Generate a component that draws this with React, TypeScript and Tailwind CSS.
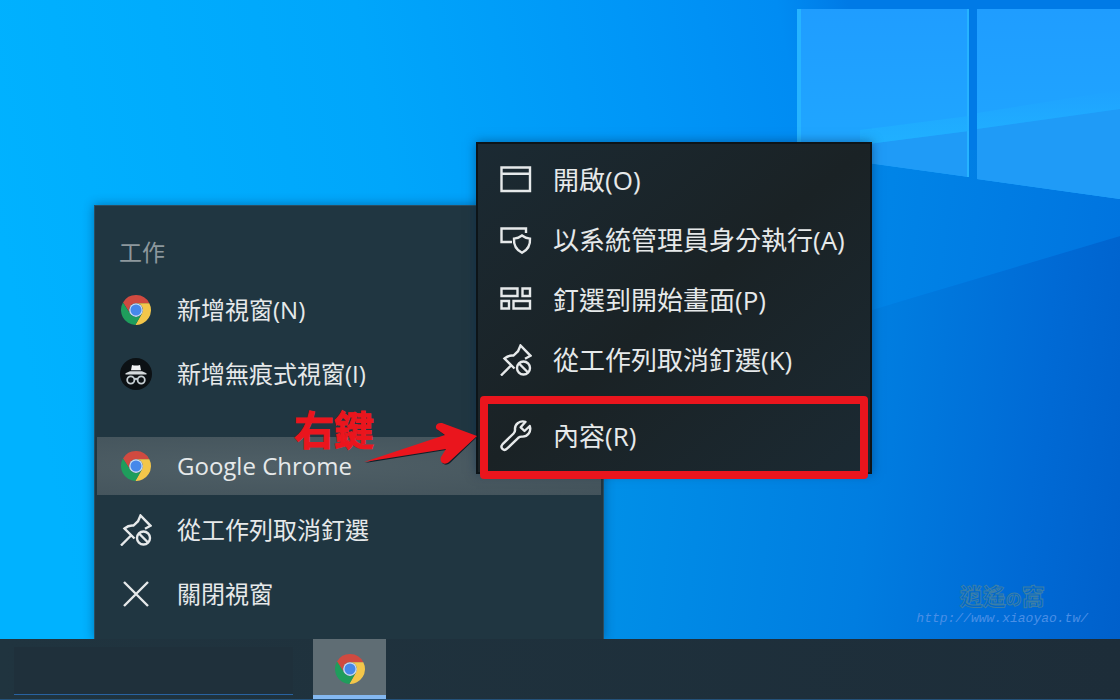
import type { ReactNode } from "react";

type MenuEntry = {
  label: string;
  icon: ReactNode;
  active?: boolean;
  marked?: boolean;
};

function ChromeIcon() {
  return (
    <svg viewBox="0 0 48 48" className="size-[30px]" aria-hidden="true">
      <path
        d="M24 13H45.3A24 24 0 0 0 3.2 12L14.5 29.5A11 11 0 0 1 24 13Z"
        fill="#d04a40"
      />
      <path
        d="M45.3 13A24 24 0 0 1 22.9 48L33.5 29.5A11 11 0 0 0 24 13Z"
        fill="#f3c64a"
      />
      <path
        d="M3.2 12A24 24 0 0 0 22.9 48L33.5 29.5A11 11 0 0 1 14.5 29.5Z"
        fill="#1f9d5c"
      />
      <circle cx="24" cy="24" r="11" fill="#c9dcf3" />
      <circle cx="24" cy="24" r="8.8" fill="#4688ea" />
    </svg>
  );
}

function IncognitoIcon() {
  return (
    <svg viewBox="0 0 32 32" className="size-8" aria-hidden="true">
      <circle cx="16" cy="16" r="16" fill="#0c1114" />
      <path d="M12 7l2 .5h4l2-.5 1 5.200H11z" fill="#f1f3f4" />
      <path d="M10 13.300h12l4.500 1.900v1.400h-21v-1.400z" fill="#d5dadc" />
      <g fill="none" stroke="#c6cfd3" strokeWidth="1.800">
        <circle cx="10.800" cy="22" r="3.600" />
        <circle cx="21.200" cy="22" r="3.600" />
        <path d="M14.400 21.500c1-.9 2.200-.9 3.200 0" />
      </g>
    </svg>
  );
}

function LineIcon({ children }: { children: ReactNode }) {
  return (
    <svg
      viewBox="0 0 32 32"
      className="size-8"
      fill="none"
      stroke="#e6e9ea"
      strokeWidth="2.4"
      aria-hidden="true"
    >
      {children}
    </svg>
  );
}

function UnpinIcon() {
  return (
    <LineIcon>
      <path d="M1 31.500L11 21.500M14.500 24.500L4.500 14.500C7.500 12 10.500 11.200 13.500 11.600L18 7.200L20.500 1.500L30.500 11.800L25 14.800" />
      <circle cx="23.500" cy="24" r="6.500" />
      <path d="M19 19.500L28 28.500" />
    </LineIcon>
  );
}

function CloseIcon() {
  return (
    <LineIcon>
      <path d="M4 4L28 28M28 4L4 28" />
    </LineIcon>
  );
}

function WindowIcon() {
  return (
    <LineIcon>
      <path d="M1.500 3.500H30V27H1.500ZM1.500 9.800H30" />
    </LineIcon>
  );
}

function AdminIcon() {
  return (
    <LineIcon>
      <path d="M12 18H1.500V4.500H26V9" />
      <path d="M22 11.500C19.500 13.500 17 14.300 14 14.600C13.500 21.500 16.500 26 22 28.800C27.500 26 30.500 21.500 30 14.600C27 14.300 24.500 13.500 22 11.500Z" />
    </LineIcon>
  );
}

function TilesIcon() {
  return (
    <LineIcon>
      <path d="M1.500 4.500H17.500V12H1.500ZM22.500 4.500H30V12H22.500ZM1.500 17H9V24.500H1.500ZM13.500 17H30V24.500H13.500Z" />
    </LineIcon>
  );
}

function WrenchIcon() {
  return (
    <LineIcon>
      <path
        strokeLinejoin="round"
        d="M25.500 1.800C20 .2 14.500 4 15 9.500C15.200 11.200 14.800 12.300 13.600 13.500L2.600 24.200C-.5 27.500 3.800 31.800 7 28.700L18.300 17.800C19.400 16.900 20.600 16.500 22.200 16.600C27.600 16.900 31.600 11.600 29.800 6L24.500 11L20.700 7.300Z"
      />
    </LineIcon>
  );
}

const taskEntries: MenuEntry[] = [
  { label: "新增視窗(N)", icon: <ChromeIcon /> },
  { label: "新增無痕式視窗(I)", icon: <IncognitoIcon /> },
];

const appEntries: MenuEntry[] = [
  { label: "Google Chrome", icon: <ChromeIcon />, active: true },
  { label: "從工作列取消釘選", icon: <UnpinIcon /> },
  { label: "關閉視窗", icon: <CloseIcon /> },
];

const contextEntries: MenuEntry[] = [
  { label: "開啟(O)", icon: <WindowIcon /> },
  { label: "以系統管理員身分執行(A)", icon: <AdminIcon /> },
  { label: "釘選到開始畫面(P)", icon: <TilesIcon /> },
  { label: "從工作列取消釘選(K)", icon: <UnpinIcon /> },
];

const propertyEntries: MenuEntry[] = [
  { label: "內容(R)", icon: <WrenchIcon />, marked: true },
];

function JumpListGroup({ entries }: { entries: MenuEntry[] }) {
  return (
    <ul className="flex flex-col gap-1.5">
      {entries.map((entry) => (
        <li key={entry.label}>
          <button
            type="button"
            className={`flex h-[58px] w-full items-center gap-[25px] px-[23px] text-left text-2xl ${
              entry.active
                ? "bg-radial-[at_35%_50%] from-[#4f5f66] to-[#43535b]"
                : "hover:bg-white/10"
            }`}
          >
            <span className="flex w-8 justify-center">{entry.icon}</span>
            {entry.label}
          </button>
        </li>
      ))}
    </ul>
  );
}

function ContextGroup({ entries }: { entries: MenuEntry[] }) {
  return (
    <ul>
      {entries.map((entry) => (
        <li key={entry.label} className="relative">
          <button
            type="button"
            className="flex h-[60px] w-full items-center gap-[21px] px-[22px] text-left text-[26px] hover:bg-white/5"
          >
            {entry.icon}
            {entry.label}
          </button>
          {entry.marked && (
            <span className="pointer-events-none absolute inset-x-0.5 -top-2.5 -bottom-[13px] rounded-sm border-8 border-[#ea151d]" />
          )}
        </li>
      ))}
    </ul>
  );
}

function Wallpaper() {
  return (
    <svg
      viewBox="0 0 1120 700"
      preserveAspectRatio="none"
      className="absolute inset-0 size-full"
      aria-hidden="true"
    >
      <defs>
        <linearGradient
          id="sky"
          gradientUnits="userSpaceOnUse"
          x1="0"
          y1="240"
          x2="860"
          y2="60"
        >
          <stop offset="0" stopColor="#00b2ff" />
          <stop offset="0.45" stopColor="#00a6fb" />
          <stop offset="0.75" stopColor="#0096f7" />
          <stop offset="0.92" stopColor="#008cf3" />
          <stop offset="1" stopColor="#007ae6" />
        </linearGradient>
        <linearGradient id="pane" x1="0" y1="0" x2="0" y2="1">
          <stop offset="0" stopColor="#1f9dff" />
          <stop offset="1" stopColor="#1fa8ff" />
        </linearGradient>
        <linearGradient
          id="beam"
          gradientUnits="userSpaceOnUse"
          x1="860"
          y1="200"
          x2="1120"
          y2="240"
        >
          <stop offset="0" stopColor="#0086e8" />
          <stop offset="1" stopColor="#0074df" />
        </linearGradient>
        <linearGradient
          id="shade"
          gradientUnits="userSpaceOnUse"
          x1="600"
          y1="500"
          x2="1130"
          y2="560"
        >
          <stop offset="0" stopColor="#0090e8" />
          <stop offset="0.5" stopColor="#007de0" />
          <stop offset="0.8" stopColor="#006ad5" />
          <stop offset="1" stopColor="#0060cb" />
        </linearGradient>
        <linearGradient id="glow" x1="0" y1="1" x2="0" y2="0">
          <stop offset="0" stopColor="#20b2ff" stopOpacity="0.9" />
          <stop offset="1" stopColor="#20b2ff" stopOpacity="0" />
        </linearGradient>
      </defs>
      <rect width="1120" height="700" fill="url(#sky)" />
      <path d="M797 150H1120V236L872 310V400H797Z" fill="url(#beam)" />
      <path d="M1120 236V640H590V394Z" fill="url(#shade)" />
      <path d="M797 9H969V177L797 153Z" fill="url(#pane)" />
      <path d="M977 9H1120V199L977 179Z" fill="url(#pane)" />
      <path d="M860 145L969 131V177L860 162Z" fill="#1f9bf7" />
      <path d="M977 129L1120 109V199L977 179Z" fill="#1f9bf7" />
      <path d="M797 9H801V152H797ZM967 9H969V177H967Z" fill="#26b4ff" />
      <path
        d="M860 130L969 116V131L860 145ZM977 113L1120 90V109L977 129Z"
        fill="url(#glow)"
      />
    </svg>
  );
}

export default function App() {
  return (
    <div className="relative flex min-h-screen flex-col overflow-hidden bg-[#0090f0] font-['Open_Sans','Noto_Sans_CJK_TC',sans-serif] text-[#e6e9ea]">
      <Wallpaper />

      <main className="relative flex flex-1 flex-col items-end justify-end pr-8 pb-3">
        <nav
          aria-label="Google Chrome"
          className="absolute bottom-0 left-[94px] w-[510px] border border-b-0 border-[#2b4d60] bg-[#203641] px-0.5 pt-[18px] pb-4 shadow-[0_0_10px_rgba(0,40,80,0.45)]"
        >
          <h2 className="flex h-[57px] items-center px-[22px] text-[23px] text-[#8d989d]">
            工作
          </h2>
          <JumpListGroup entries={taskEntries} />
          <div className="h-[34px]" />
          <JumpListGroup entries={appEntries} />
        </nav>

        <div
          role="group"
          aria-label="Google Chrome 選項"
          className="absolute bottom-[165px] left-[476px] flex w-[396px] flex-col gap-4 border-2 border-[#0d1418] bg-linear-to-br from-[#1b2a33] via-[#1a2225] to-[#1b2a33] py-1.5 shadow-[0_0_10px_rgba(0,40,80,0.5)]"
        >
          <ContextGroup entries={contextEntries} />
          <ContextGroup entries={propertyEntries} />
        </div>

        <div className="pointer-events-none absolute bottom-[189px] left-[294px]">
          <p className="text-[40px] leading-10 font-bold text-[#ea151d] [-webkit-text-stroke:1px_#ea151d]">
            右鍵
          </p>
          <svg
            viewBox="0 0 116 44"
            className="absolute top-3 left-[69px] h-11 w-[116px]"
            aria-hidden="true"
          >
            <path
              d="M2 41L83 28L79 36C77 41 82 45 87 41L114 15L79 2C73 1 72 7 76 9L82 14Z"
              fill="#10202a"
            />
            <path
              d="M1 40L83 27L78 35C76 40 81 44 86 40L114 14L79 1C73 0 71 6 75 8L82 13Z"
              fill="#ea151d"
            />
          </svg>
        </div>

        <footer className="relative flex flex-col items-center">
          <p className="text-[23px] leading-7 font-bold text-[#0068cf] [-webkit-text-stroke:1px_#3b7fa8]">
            逍遙<span className="text-base">の</span>窩
          </p>
          <a
            href="http://www.xiaoyao.tw/"
            className="font-['Liberation_Mono',monospace] text-[13px] leading-4 text-[#4a8fe6] italic"
          >
            http://www.xiaoyao.tw/
          </a>
        </footer>
      </main>

      <div className="relative flex h-[61px] items-stretch gap-5 border-b border-[#24527a] bg-linear-to-r from-[#20343f] to-[#1d2d39] pl-3.5">
        <input
          type="search"
          aria-label="搜尋"
          className="mt-2 mb-1 w-[279px] border-b border-[#2862a0] bg-[#1f303b] outline-none"
        />
        <button
          type="button"
          aria-label="Google Chrome"
          className="flex w-[73px] items-center justify-center border-b-4 border-[#84b8f0] bg-[#5f6d74] pt-1"
        >
          <ChromeIcon />
        </button>
      </div>
    </div>
  );
}
